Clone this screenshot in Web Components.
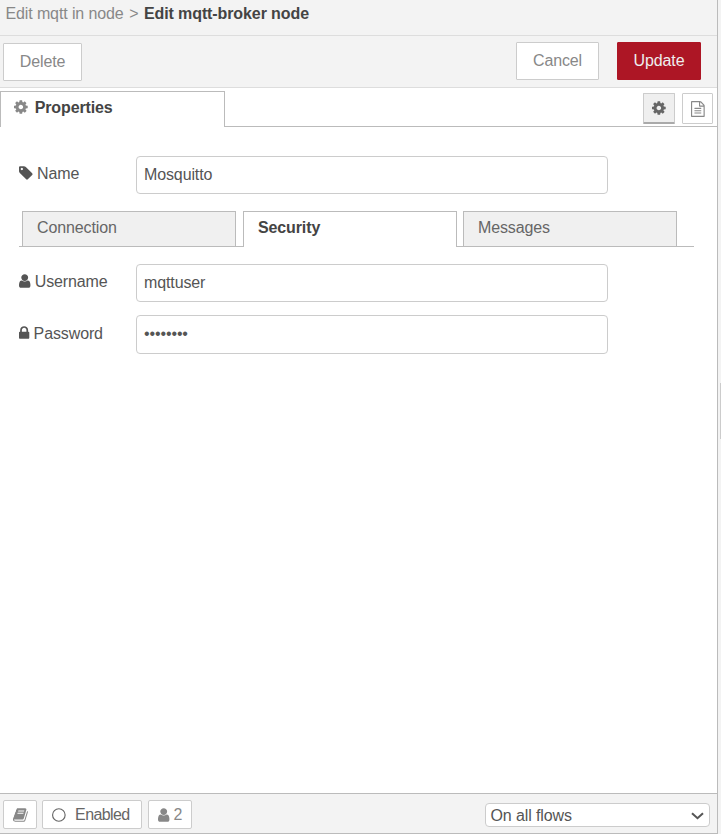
<!DOCTYPE html>
<html lang="en">
<head>
<meta charset="utf-8">
<title>Edit mqtt-broker node</title>
<style>
html,body{margin:0;height:100%;overflow:hidden}
body{font:16px/20px "Liberation Sans",Arial,sans-serif;letter-spacing:-.12px;color:#555;background:#f3f3f3}
</style>
</head>
<body>
<editor-tray></editor-tray>
<script>
const ICONS = {
  cog: [128, 1536, 'M1152 896q0-106-75-181t-181-75-181 75-75 181 75 181 181 75 181-75 75-181zm512-109v222q0 12-8 23t-20 13l-185 28q-19 54-39 91 35 50 107 138 10 12 10 25t-9 23q-27 37-99 108t-94 71q-12 0-26-9l-138-108q-44 23-91 38-16 136-29 186-7 28-36 28h-222q-14 0-24.500-8.500t-11.500-21.500l-28-184q-49-16-90-37l-141 107q-10 9-25 9-14 0-25-11-126-114-165-168-7-10-7-23 0-12 8-23 15-21 51-66.500t54-70.500q-27-50-41-99l-183-27q-13-2-21-12.500t-8-23.500v-222q0-12 8-23t19-13l186-28q14-46 39-92-40-57-107-138-10-12-10-24 0-10 9-23 26-36 98.500-107.500t94.500-71.500q13 0 26 10l138 107q44-23 91-38 16-136 29-186 7-28 36-28h222q14 0 24.500 8.500t11.500 21.500l28 184q49 16 90 37l142-107q9-9 24-9 13 0 25 10 129 119 165 170 7 8 7 22 0 12-8 23-15 21-51 66.500t-54 70.500q26 50 41 98l183 28q13 2 21 12.500t8 23.500z'],
  tag: [128, 1536, 'M576 448q0-53-37.500-90.500t-90.500-37.500-90.500 37.500-37.500 90.500 37.500 90.500 90.500 37.500 90.500-37.500 37.500-90.500zm1067 576q0 53-37 90l-491 492q-39 37-91 37-53 0-90-37l-715-716q-38-37-64.500-101t-26.500-117v-416q0-52 38-90t90-38h416q53 0 117 26.500t102 64.500l715 714q37 39 37 91z'],
  user: [256, 1280, 'M1536 1399q0 109-62.500 187t-150.500 78h-854q-88 0-150.500-78t-62.500-187q0-85 8.500-160.500t31.500-152 58.500-131 94-89 134.500-34.500q131 128 313 128t313-128q76 0 134.500 34.500t94 89 58.500 131 31.500 152 8.500 160.500zm-256-887q0 159-112.500 271.500t-271.500 112.500-271.500-112.500-112.500-271.500 112.500-271.500 271.500-112.500 271.500 112.500 112.500 271.500z'],
  lock: [320, 1152, 'M640 768h512v-192q0-106-75-181t-181-75-181 75-75 181v192zm832 96v576q0 40-28 68t-68 28h-960q-40 0-68-28t-28-68v-576q0-40 28-68t68-28h32v-192q0-184 132-316t316-132 316 132 132 316v192h32q40 0 68 28t28 68z'],
  file: [128, 1536, 'M1596 380q28 28 48 76t20 88v1152q0 40-28 68t-68 28h-1344q-40 0-68-28t-28-68v-1600q0-40 28-68t68-28h896q40 0 88 20t76 48zm-444-244v376h376q-10-29-22-41l-313-313q-12-12-41-22zm384 1528v-1024h-416q-40 0-68-28t-28-68v-416h-768v1536h1280zm-1024-864q0-14 9-23t23-9h704q14 0 23 9t9 23v64q0 14-9 23t-23 9h-704q-14 0-23-9t-9-23v-64zm736 224q14 0 23 9t9 23v64q0 14-9 23t-23 9h-704q-14 0-23-9t-9-23v-64q0-14 9-23t23-9h704zm0 256q14 0 23 9t9 23v64q0 14-9 23t-23 9h-704q-14 0-23-9t-9-23v-64q0-14 9-23t23-9h704z'],
  book: [64, 1664, 'M1703 478q40 57 18 129l-275 906q-19 64-76.500 107.500t-122.500 43.500h-923q-77 0-148.500-53.500t-99.500-131.500q-24-67-2-127 0-4 3-27t4-37q1-8-3-21.500t-3-19.500q2-11 8-21t16.500-23.500 16.500-23.500q23-38 45-91.500t30-91.500q3-10 .5-30t-.5-28q3-11 17-28t17-23q21-36 42-92t25-90q1-9-2.500-32t.5-28q4-13 22-30.500t22-22.500q19-26 42.500-84.500t27.500-96.500q1-8-3-25.500t-2-26.500q2-8 9-18t18-23 17-21q8-12 16.500-30.500t15-35 16-36 19.500-32 26.500-23.500 36-11.500 47.500 5.500l-1 3q38-9 51-9h761q74 0 114 56t18 130l-274 906q-36 119-71.500 153.500t-128.500 34.500h-869q-27 0-38 15-11 16-1 43 24 70 144 70h923q29 0 56-15.500t35-41.500l300-987q7-22 5-57 38 15 59 43zm-1064 2q-4 13 2 22.500t20 9.500h608q13 0 25.500-9.500t16.500-22.500l21-64q4-13-2-22.500t-20-9.500h-608q-13 0-25.500 9.500t-16.500 22.500zm-83 256q-4 13 2 22.500t20 9.500h608q13 0 25.500-9.500t16.500-22.500l21-64q4-13-2-22.500t-20-9.500h-608q-13 0-25.500 9.500t-16.500 22.500z'],
  circle: [128, 1536, 'M896 256a640 640 0 1 0 0 1280a640 640 0 1 0 0-1280zM896 128a768 768 0 1 1 0 1536a768 768 0 1 1 0-1536z']
};

function define(name, html) {
  const tpl = document.createElement('template');
  tpl.innerHTML = html;
  customElements.define(name, class extends HTMLElement {
    constructor() {
      super();
      this.attachShadow({ mode: 'open' }).append(tpl.content.cloneNode(true));
    }
  });
}

customElements.define('ui-icon', class extends HTMLElement {
  connectedCallback() {
    if (this.shadowRoot) return;
    const [x, w, d] = ICONS[this.getAttribute('name')];
    this.attachShadow({ mode: 'open' }).innerHTML = `
      <style>
        :host{display:inline-block;height:16px;width:${w / 112}px;vertical-align:-2.3px;line-height:0}
        svg{display:block;width:100%;height:100%;overflow:visible}
      </style>
      <svg viewBox="${x} 0 ${w} 1792" fill="currentColor"><path fill-rule="evenodd" d="${d}"/></svg>`;
  }
});

define('ui-button', `
  <style>
    :host{display:flex;box-sizing:border-box;height:38px;align-items:center;justify-content:center;
      background:#fff;border:1px solid #ccc;border-radius:1px;color:#888;white-space:pre}
    :host([primary]){background:#ad1625;border-color:#ad1625;color:#eee}
    :host([small]){height:31px}
    :host([selected]){background:#efefef;color:#666;border-bottom:2px solid #aaa}
    :host([foot]){height:29px;border-radius:2px}
  </style><slot></slot>`);

define('ui-tab', `
  <style>
    :host{display:block;box-sizing:border-box;height:35px;padding:6px 14px 0;border:1px solid #bbb;
      border-bottom:0;background:#f0f0f0;color:#666;white-space:nowrap}
    :host([active]){background:#fff;color:#444;font-weight:bold;height:36px}
  </style><slot></slot>`);

define('form-row', `
  <style>
    :host{display:flex;height:38px}
    .label{width:117px;padding-top:var(--label-top,8px);box-sizing:border-box}
    .field{box-sizing:border-box;width:472px;height:100%;border:1px solid #ccc;border-radius:4px;
      background:#fff;padding:8px 7px}
  </style>
  <div class="label"><slot name="label"></slot></div>
  <div class="field"><slot></slot></div>`);

define('ui-select', `
  <style>
    :host{display:flex;box-sizing:border-box;width:225px;height:24px;align-items:center;
      justify-content:space-between;border:1px solid #ccc;border-radius:4px;background:#fff;
      padding:1px 5px 0 4.500px;color:#555}
  </style>
  <slot></slot>
  <svg width="13" height="8" viewBox="0 0 13 8" fill="none" stroke="#555" stroke-width="2"><path d="M1 1.200 6.500 6.200 12 1.200"/></svg>`);

define('editor-tray', `
  <style>
    :host{display:flex;flex-direction:column;box-sizing:border-box;width:718px;height:834px;
      background:#fff;border-right:1px solid #bbb;border-bottom:1px solid #bbb}
    header{box-sizing:border-box;height:36px;padding:4px 5.500px;background:#f3f3f3;border-bottom:1px solid #ddd;
      color:#888;white-space:pre}
    header .sep{margin:0 1px 0 1.500px}
    header b{color:#444;letter-spacing:-.1px}
    .tools{display:flex;box-sizing:border-box;height:52px;padding:6px 16px 0 3px;background:#f3f3f3;border-bottom:1px solid #ddd}
    .tools .del{width:79px;margin:1px auto 0 0}
    .tools .cancel{width:83px;margin-right:18px}
    .tools .update{width:84px}
    .tabs{display:flex;box-sizing:border-box;height:39px;border-bottom:1px solid #bbb;padding:3px 4px 0 0}
    .tabs ui-tab{width:225px;padding-left:13px}
    .tabs ui-tab ui-icon{color:#888;margin-right:7px}
    .tabs .gear{width:32px;margin:2px 7px 0 auto}
    .tabs .doc{width:31px;margin-top:2px}
    main{flex:1;padding:29px 23px 0 19px}
    .inner{display:flex;box-sizing:border-box;height:36px;gap:7px;padding-left:3px;margin:17px 0;border-bottom:1px solid #bbb}
    .inner ui-tab{width:214px;flex:none}
    .inner ui-tab:last-child{margin-left:-1px}
    .pass{margin-top:13px;height:39px;--label-top:9px}
    footer{display:flex;box-sizing:border-box;height:40px;padding:6px 7px 0 3px;background:#f3f3f3;border-top:1px solid #bbb}
    footer .book{width:34px;margin-right:5px}
    footer .on{width:100px;margin-right:6px;padding-right:2px;color:#666;letter-spacing:-.6px}
    footer .on ui-icon{margin-right:9px}
    footer .users{width:44px}
    footer ui-select{margin:3px 0 0 auto;letter-spacing:-.12px}
    .edge{position:absolute;left:720px;top:383px;width:1px;height:56px;background:#ccc}
  </style>
  <header>Edit mqtt in node <span class="sep">&gt;</span> <b>Edit mqtt-broker node</b></header>
  <div class="tools">
    <ui-button class="del">Delete</ui-button>
    <ui-button class="cancel">Cancel</ui-button>
    <ui-button class="update" primary>Update</ui-button>
  </div>
  <div class="tabs">
    <ui-tab active><ui-icon name="cog"></ui-icon>Properties</ui-tab>
    <ui-button class="gear" small selected><ui-icon name="cog"></ui-icon></ui-button>
    <ui-button class="doc" small><ui-icon name="file"></ui-icon></ui-button>
  </div>
  <main>
    <form-row><span slot="label"><ui-icon name="tag"></ui-icon> Name</span>Mosquitto</form-row>
    <div class="inner"><ui-tab>Connection</ui-tab><ui-tab active>Security</ui-tab><ui-tab>Messages</ui-tab></div>
    <form-row><span slot="label"><ui-icon name="user"></ui-icon> Username</span>mqttuser</form-row>
    <form-row class="pass"><span slot="label"><ui-icon name="lock"></ui-icon> Password</span>••••••••</form-row>
  </main>
  <footer>
    <ui-button class="book" foot><ui-icon name="book"></ui-icon></ui-button>
    <ui-button class="on" foot><ui-icon name="circle"></ui-icon>Enabled</ui-button>
    <ui-button class="users" foot><ui-icon name="user"></ui-icon> 2</ui-button>
    <ui-select>On all flows</ui-select>
  </footer>
  <div class="edge"></div>`);
</script>
</body>
</html>
